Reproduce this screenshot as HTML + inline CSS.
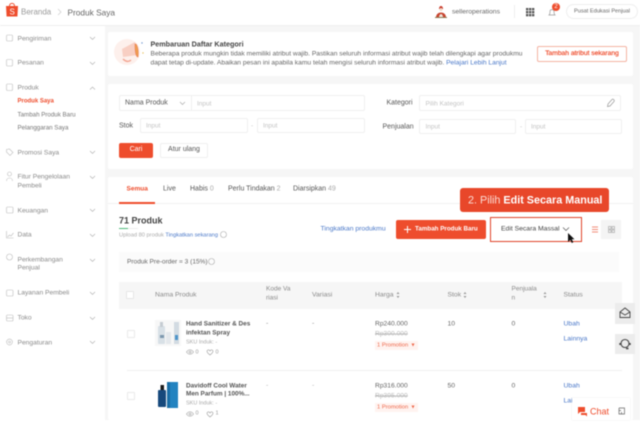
<!DOCTYPE html>
<html><head><meta charset="utf-8"><style>
html,body{margin:0;padding:0;background:#fff}
#p{position:relative;width:640px;height:435px;overflow:hidden;background:#fff;font-family:"Liberation Sans",sans-serif;color:#555}
#w{position:absolute;left:0;top:0;width:640px;height:435px;filter:blur(.5px)}
.t{position:absolute;white-space:nowrap;line-height:12px;font-size:7px;transform:translateY(.5px)}
.b{position:absolute;box-sizing:border-box}
.s{color:#8a8a8a;font-size:6.700px}
.ph{color:#c4c4c4;font-size:6.500px}
.in{position:absolute;box-sizing:border-box;border:1px solid #f0f0f0;border-radius:2px;background:#fff}
.bl{color:#4a78c8}
svg{position:absolute;overflow:visible}
</style></head><body><div id="p"><div id="w">
<div class="b" style="left:105px;top:25px;width:535px;height:395px;background:#f6f6f6"></div>
<div class="b" style="left:0;top:25px;width:640px;height:1px;background:#efefef"></div>
<div class="b" style="left:0;top:420px;width:640px;height:15px;background:#fff"></div>

<!-- header -->
<svg style="left:6px;top:2px" width="12" height="15" viewBox="0 0 12 15"><path d="M0 4h12l-.6 10.500H.6z" fill="#ee4d2d"/><path d="M3.500 4C3.500 .5 8.500 .5 8.500 4" fill="none" stroke="#ee4d2d" stroke-width="1"/></svg>
<span class="t" style="left:9.500px;top:5.500px;color:#fff;font-size:8px">S</span>
<span class="t" style="left:21px;top:5.500px;font-size:8px;color:#999">Beranda</span>
<svg style="left:57px;top:8px" width="5" height="8"><path d="M1 1l3 3-3 3" fill="none" stroke="#ccc" stroke-width=".7"/></svg>
<span class="t" style="left:67.500px;top:5.500px;font-size:8.300px;color:#666">Produk Saya</span>
<svg style="left:435px;top:5px" width="12" height="13" viewBox="0 0 12 13"><path d="M4 4c0-4 4-4 4 0z" fill="#c8392a"/><circle cx="6" cy="4.500" r="1.500" fill="#f1d8c8"/><path d="M1 12c.5-6 9.500-6 10 0z" fill="#c8442f"/><path d="M4 12c.5-4 3.500-4 4 0z" fill="#f0e8e0"/><path d="M0 12h12v1H0z" fill="#8c7a52"/></svg>
<span class="t" style="left:452px;top:5.500px;font-size:6.800px;color:#666">selleroperations</span>
<div class="b" style="left:514px;top:5px;width:1px;height:13px;background:#eee"></div>
<svg style="left:525.500px;top:7.500px" width="9" height="9"><g fill="#555"><rect x="0" y="0" width="2.300" height="2.300"/><rect x="3" y="0" width="2.300" height="2.300"/><rect x="6" y="0" width="2.300" height="2.300"/><rect x="0" y="3" width="2.300" height="2.300"/><rect x="3" y="3" width="2.300" height="2.300"/><rect x="6" y="3" width="2.300" height="2.300"/><rect x="0" y="6" width="2.300" height="2.300"/><rect x="3" y="6" width="2.300" height="2.300"/><rect x="6" y="6" width="2.300" height="2.300"/></g></svg>
<svg style="left:548px;top:8px" width="8" height="9"><path d="M1 7c1-1 1-2 1-3.500C2 1 6 1 6 3.500 6 5 6 6 7 7z" fill="none" stroke="#999" stroke-width=".7"/></svg>
<div class="b" style="left:552px;top:3px;width:8px;height:8px;border-radius:50%;background:#ee4d2d;color:#fff;font-size:6px;line-height:8px;text-align:center">2</div>
<div class="b" style="left:566px;top:4px;width:72px;height:15px;border:1px solid #eee;border-radius:8px;background:#fff"></div>
<span class="t" style="left:574px;top:5px;font-size:5.600px;color:#666">Pusat Edukasi Penjual</span>

<!-- sidebar -->
<svg style="left:6px;top:33px" width="8" height="245" fill="none" stroke="#bbb" stroke-width=".6">
<rect x=".5" y="2" width="6" height="6" rx="1"/><rect x=".5" y="26.500" width="6" height="6.500" rx="1"/><rect x=".5" y="51" width="6" height="6.500" rx="1"/>
<path d="M.5 116.500l3-.5 3.500 3.500-3 3-3.500-3.500z"/><circle cx="3.500" cy="141" r="2"/><path d="M.5 148c0-4 6-4 6 0"/>
<rect x=".5" y="174" width="6.500" height="6" rx="1"/><path d="M.5 198v7h7M1.500 204l2-2 1.500 1 2.500-3"/><circle cx="3.500" cy="224" r="3"/>
</svg>
<svg style="left:6px;top:290px" width="8" height="60" fill="none" stroke="#bbb" stroke-width=".6"><rect x=".5" y="0" width="6.500" height="6" rx="1"/><rect x=".5" y="25" width="6.500" height="6" rx="1"/><path d="M.5 28h6.500"/><circle cx="3.500" cy="52" r="2.900"/><circle cx="3.500" cy="52" r="1"/></svg>
<span class="t s" style="left:17.500px;top:32.500px">Pengiriman</span>
<span class="t s" style="left:17.500px;top:57px">Pesanan</span>
<span class="t s" style="left:17.500px;top:81.500px">Produk</span>
<span class="t" style="left:17.500px;top:95px;color:#ee4d2d;font-weight:bold;font-size:6px">Produk Saya</span>
<span class="t" style="left:17.500px;top:108.500px;font-size:6.200px;color:#777">Tambah Produk Baru</span>
<span class="t" style="left:17.500px;top:122px;font-size:6.200px;color:#777">Pelanggaran Saya</span>
<span class="t s" style="left:17.500px;top:146.500px">Promosi Saya</span>
<span class="t s" style="left:17.500px;top:171px">Fitur Pengelolaan</span>
<span class="t s" style="left:17.500px;top:180px">Pembeli</span>
<span class="t s" style="left:17.500px;top:204.500px">Keuangan</span>
<span class="t s" style="left:17.500px;top:229px">Data</span>
<span class="t s" style="left:17.500px;top:253.500px">Perkembangan</span>
<span class="t s" style="left:17.500px;top:262px">Penjual</span>
<span class="t s" style="left:17.500px;top:287px">Layanan Pembeli</span>
<span class="t s" style="left:17.500px;top:312px">Toko</span>
<span class="t s" style="left:17.500px;top:336.500px">Pengaturan</span>
<svg style="left:89px;top:30px" width="10" height="320" fill="none" stroke="#aaa" stroke-width=".6">
<path d="M1 7l2.500 2.500L6 7M1 32l2.500 2.500L6 32M1 59.500L3.500 57 6 59.500M1 121l2.500 2.500L6 121M1 146l2.500 2.500L6 146M1 179l2.500 2.500L6 179M1 204l2.500 2.500L6 204M1 229l2.500 2.500L6 229M1 262l2.500 2.500L6 262M1 287l2.500 2.500L6 287M1 311l2.500 2.500L6 311"/></svg>

<!-- card 1 -->
<div class="b" style="left:108px;top:32px;width:525px;height:44px;background:#fff;border-radius:2px"></div>
<svg style="left:114px;top:38px" width="34" height="30" viewBox="0 0 34 30"><circle cx="13" cy="14" r="13" fill="#fdf0ec"/><path d="M8 11l13-7 3 13-15 2z" fill="#f8cfc3"/><path d="M21 6c2-1 4 6 3 13-2 0-3-6-3-13z" fill="#efa04f" stroke="#ea7c55" stroke-width=".6"/><path d="M9 21c3 3 6 3 8 1" fill="none" stroke="#f3a592" stroke-width="1.400"/><circle cx="28" cy="5" r=".7" fill="#6b93cf"/><circle cx="29" cy="15" r=".7" fill="#e8c05a"/></svg>
<span class="t" style="left:150.500px;top:38px;font-size:7.200px;font-weight:bold;color:#444">Pembaruan Daftar Kategori</span>
<span class="t" style="left:150.500px;top:48px;font-size:6.680px;color:#666">Beberapa produk mungkin tidak memiliki atribut wajib. Pastikan seluruh informasi atribut wajib telah dilengkapi agar produkmu</span>
<span class="t" style="left:150.500px;top:56.500px;font-size:6.680px;color:#666">dapat tetap di-update. Abaikan pesan ini apabila kamu telah mengisi seluruh informasi atribut wajib. <span class="bl">Pelajari Lebih Lanjut</span></span>
<div class="b" style="left:537px;top:46px;width:90px;height:16px;border:1px solid #f4b3a3;border-radius:2px;background:#fff;color:#ee4d2d;font-size:6.700px;line-height:14px;text-align:center;-webkit-text-stroke:.2px #ee4d2d">Tambah atribut sekarang</div>

<!-- card 2 -->
<div class="b" style="left:108px;top:84px;width:525px;height:85px;background:#fff;border-radius:2px"></div>
<div class="in" style="left:119px;top:95px;width:246px;height:16px"></div>
<div class="b" style="left:191px;top:96px;width:1px;height:14px;background:#f0f0f0"></div>
<span class="t" style="left:125px;top:97px;color:#555">Nama Produk</span>
<svg style="left:179px;top:101px" width="7" height="5"><path d="M1 1l2.500 2.500L6 1" fill="none" stroke="#aaa" stroke-width=".7"/></svg>
<span class="t ph" style="left:197px;top:97.500px">Input</span>
<span class="t" style="left:119px;top:120px;color:#555">Stok</span>
<div class="in" style="left:140px;top:118px;width:108px;height:15px"></div>
<span class="t ph" style="left:146px;top:120px">Input</span>
<span class="t ph" style="left:251px;top:120px">-</span>
<div class="in" style="left:257px;top:118px;width:108px;height:15px"></div>
<span class="t ph" style="left:263px;top:120px">Input</span>
<span class="t" style="left:386.500px;top:96.500px;color:#555">Kategori</span>
<div class="in" style="left:419px;top:95px;width:202px;height:16px"></div>
<span class="t ph" style="left:425.500px;top:97.500px">Pilih Kategori</span>
<svg style="left:606px;top:98px" width="10" height="10"><path d="M2 6l4-4.500c1-1 3 .8 2 2L4 8 1.500 8.500z" fill="none" stroke="#999" stroke-width=".7"/></svg>
<span class="t" style="left:382.500px;top:120.500px;color:#555">Penjualan</span>
<div class="in" style="left:419px;top:119px;width:97px;height:15px"></div>
<span class="t ph" style="left:425.500px;top:121px">Input</span>
<span class="t ph" style="left:520px;top:121px">-</span>
<div class="in" style="left:525px;top:119px;width:97px;height:15px"></div>
<span class="t ph" style="left:531px;top:121px">Input</span>
<div class="b" style="left:119px;top:143px;width:34px;height:15px;background:#ee4d2d;border-radius:2px;color:#fff;font-size:7px;line-height:14px;text-align:center">Cari</div>
<div class="b" style="left:160px;top:143px;width:48px;height:15px;border:1px solid #f0f0f0;border-radius:2px;background:#fff;color:#555;font-size:7px;line-height:11px;text-align:center">Atur ulang</div>

<!-- card 3 -->
<div class="b" style="left:108px;top:177px;width:525px;height:243px;background:#fff;border-radius:2px"></div>
<div class="b" style="left:108px;top:203px;width:525px;height:1px;background:#f2f2f2"></div>
<span class="t" style="left:126.500px;top:183px;color:#ee4d2d;font-size:6.500px;font-weight:bold">Semua</span>
<div class="b" style="left:119px;top:202px;width:36px;height:1.500px;background:#ee4d2d"></div>
<span class="t" style="left:163px;top:183px">Live</span>
<span class="t" style="left:190px;top:183px">Habis <span style="color:#aaa">0</span></span>
<span class="t" style="left:228px;top:183px">Perlu Tindakan <span style="color:#aaa">2</span></span>
<span class="t" style="left:293px;top:183px">Diarsipkan <span style="color:#aaa">49</span></span>

<span class="t" style="left:119px;top:214px;font-size:9px;font-weight:bold;color:#444">71 Produk</span>
<div class="b" style="left:119px;top:227.500px;width:9px;height:1.500px;background:#4fba7a"></div>
<div class="b" style="left:128px;top:227.500px;width:10px;height:1.500px;background:#eee"></div>
<span class="t" style="left:119px;top:229px;font-size:5.700px;color:#aaa">Upload 80 produk <span class="bl">Tingkatkan sekarang</span></span>
<svg style="left:220px;top:231px" width="7" height="7"><circle cx="3.500" cy="3.500" r="3" fill="none" stroke="#aaa" stroke-width=".6"/></svg>
<span class="t bl" style="left:320.500px;top:223px;font-size:6.800px">Tingkatkan produkmu</span>
<div class="b" style="left:396px;top:220px;width:90px;height:19px;background:#ee4d2d;border-radius:2px;"></div>
<svg style="left:403px;top:225px" width="9" height="9"><path d="M4.500 1v7M1 4.500h7" stroke="#fff" stroke-width="1"/></svg>
<span class="t" style="left:415px;top:223px;color:#fff;font-weight:bold;font-size:6.250px">Tambah Produk Baru</span>
<div class="b" style="left:490px;top:216.500px;width:91.500px;height:25px;border:1.500px solid #e0442a;background:#fff"></div>
<span class="t" style="left:501px;top:223px;color:#444;font-size:6.800px">Edit Secara Massal</span>
<svg style="left:562px;top:227px" width="8" height="5"><path d="M1 .5l3 3 3-3" fill="none" stroke="#555" stroke-width=".7"/></svg>
<svg style="left:567px;top:232px" width="9" height="12"><path d="M1 1v9l2.300-2 1.500 3 1.500-.7-1.500-3H7.500z" fill="#111"/></svg>
<div class="b" style="left:601px;top:220px;width:20px;height:19px;background:#f4f4f4"></div>
<svg style="left:592px;top:226px" width="8" height="8"><path d="M0 1h6M0 3.500h6M0 6h6" stroke="#ee6a4d" stroke-width=".7"/></svg>
<svg style="left:608px;top:226px" width="8" height="8"><g fill="none" stroke="#aaa" stroke-width=".7"><rect x=".5" y=".5" width="2.500" height="2.500"/><rect x="4" y=".5" width="2.500" height="2.500"/><rect x=".5" y="4" width="2.500" height="2.500"/><rect x="4" y="4" width="2.500" height="2.500"/></g></svg>

<div class="b" style="left:460px;top:188px;width:148.500px;height:24px;background:#e8472a;border-radius:3px"></div>
<span class="t" style="left:468px;top:194px;font-size:10.800px;color:#fbdcd4">2. Pilih <b style="color:#fff">Edit Secara Manual</b></span>

<div class="b" style="left:119px;top:252px;width:500px;height:20px;background:#fbfbfb"></div>
<span class="t" style="left:127px;top:256px;font-size:6.550px;color:#666">Produk Pre-order = 3 (15%)</span>
<svg style="left:208px;top:258px" width="7" height="7"><circle cx="3.500" cy="3.500" r="3" fill="none" stroke="#aaa" stroke-width=".6"/></svg>

<!-- table head -->
<div class="b" style="left:119px;top:281.500px;width:503px;height:27px;background:#f6f6f6"></div>
<div class="b" style="left:126px;top:291px;width:8px;height:8px;border:1px solid #e6e6e6;border-radius:1px;background:#fff"></div>
<span class="t s" style="left:155px;top:289px;font-size:6.800px">Nama Produk</span>
<span class="t s" style="left:266px;top:283px;font-size:6.500px">Kode Va</span>
<span class="t s" style="left:266px;top:292px;font-size:6.500px">riasi</span>
<span class="t s" style="left:312px;top:289px;font-size:6.800px">Variasi</span>
<span class="t s" style="left:375px;top:289px;font-size:6.800px">Harga</span>
<span class="t s" style="left:447.500px;top:289px;font-size:6.800px">Stok</span>
<span class="t s" style="left:511.500px;top:283px;font-size:6.500px">Penjuala</span>
<span class="t s" style="left:511.500px;top:292px;font-size:6.500px">n</span>
<span class="t s" style="left:563.500px;top:289px;font-size:6.800px">Status</span>
<svg style="left:396px;top:292px" width="4" height="6"><path d="M2 0l1.500 2h-3zM2 6L.5 4h3z" fill="#999"/></svg>
<svg style="left:463px;top:292px" width="4" height="6"><path d="M2 0l1.500 2h-3zM2 6L.5 4h3z" fill="#999"/></svg>
<svg style="left:543px;top:292px" width="4" height="6"><path d="M2 0l1.500 2h-3zM2 6L.5 4h3z" fill="#999"/></svg>

<!-- row 1 -->
<div class="b" style="left:127px;top:330px;width:8px;height:8px;border:1px solid #eaeaea;border-radius:1px"></div>
<svg style="left:155px;top:320px" width="26" height="26"><rect width="26" height="26" fill="#f7f7f7"/><rect x="3" y="6" width="7" height="18" rx="1" fill="#d8e0e6"/><rect x="5" y="2" width="3" height="5" fill="#c5ccd2"/><rect x="11" y="12" width="5" height="12" fill="#e4e8ec"/><rect x="19" y="2" width="5" height="22" fill="#d2dbe2"/><rect x="20" y="15" width="3" height="5" fill="#4e94c8"/><rect x="5" y="15" width="4" height="3" fill="#7d98ae"/></svg>
<span class="t" style="left:186px;top:318px;font-weight:bold;font-size:6.400px;color:#555">Hand Sanitizer &amp; Des</span>
<span class="t" style="left:186px;top:326.500px;font-weight:bold;font-size:6.400px;color:#555">infektan Spray</span>
<span class="t" style="left:186px;top:335.500px;font-size:5.500px;color:#aaa">SKU Induk: -</span>
<svg style="left:186px;top:349px" width="30" height="7" fill="none" stroke="#999" stroke-width=".6"><path d="M.5 3c2-3 5-3 7 0-2 3-5 3-7 0z"/><circle cx="4" cy="3" r="1"/><path d="M21 2c1-2 2.500-1 3 0 .5-1 2-2 3 0 0 2-2 3-3 4-1-1-3-2-3-4z"/></svg>
<span class="t" style="left:195.500px;top:346px;font-size:5.500px;color:#999">0</span>
<span class="t" style="left:215.500px;top:346px;font-size:5.500px;color:#999">0</span>
<span class="t" style="left:266px;top:318px;color:#999">-</span>
<span class="t" style="left:312px;top:318px;color:#999">-</span>
<span class="t" style="left:375px;top:318px;font-size:6.700px;color:#666">Rp240.000</span>
<span class="t" style="left:375px;top:328px;font-size:6.700px;color:#bbb;text-decoration:line-through">Rp300.000</span>
<div class="b" style="left:375px;top:341px;width:43px;height:9px;background:#fff3f0"></div>
<span class="t" style="left:377px;top:339px;font-size:5.800px;color:#ee6a4d">1 Promotion &nbsp;▾</span>
<span class="t" style="left:447.500px;top:318px;font-size:6.800px;color:#666">10</span>
<span class="t" style="left:511.500px;top:318px;font-size:6.800px;color:#666">0</span>
<span class="t bl" style="left:563.500px;top:317.500px;font-size:6.800px">Ubah</span>
<span class="t bl" style="left:563.500px;top:332.500px;font-size:6.800px">Lainnya</span>
<div class="b" style="left:127px;top:370px;width:495px;height:1px;background:#f0f0f0"></div>

<!-- row 2 -->
<div class="b" style="left:127px;top:392px;width:8px;height:8px;border:1px solid #eaeaea;border-radius:1px"></div>
<svg style="left:156px;top:381px" width="24" height="28"><rect x="2" y="9" width="8" height="17" rx="1" fill="#17497c"/><rect x="4.500" y="4" width="3.500" height="5" fill="#1a1a1a"/><rect x="11" y="1" width="11" height="26" fill="#2283c0"/><rect x="11" y="1" width="3" height="26" fill="#1a6ea6"/></svg>
<span class="t" style="left:186px;top:380px;font-weight:bold;font-size:6.400px;color:#555">Davidoff Cool Water</span>
<span class="t" style="left:186px;top:388px;font-weight:bold;font-size:6.400px;color:#555">Men Parfum | 100%...</span>
<span class="t" style="left:186px;top:397px;font-size:5.500px;color:#aaa">SKU Induk: -</span>
<svg style="left:186px;top:410.500px" width="30" height="7" fill="none" stroke="#999" stroke-width=".6"><path d="M.5 3c2-3 5-3 7 0-2 3-5 3-7 0z"/><circle cx="4" cy="3" r="1"/><path d="M21 2c1-2 2.500-1 3 0 .5-1 2-2 3 0 0 2-2 3-3 4-1-1-3-2-3-4z"/></svg>
<span class="t" style="left:195.500px;top:407px;font-size:5.500px;color:#999">0</span>
<span class="t" style="left:215.500px;top:407px;font-size:5.500px;color:#999">1</span>
<span class="t" style="left:266px;top:380px;color:#bbb">-</span>
<span class="t" style="left:312px;top:380px;color:#bbb">-</span>
<span class="t" style="left:375px;top:380px;font-size:6.700px;color:#666">Rp316.000</span>
<span class="t" style="left:375px;top:390px;font-size:6.700px;color:#bbb;text-decoration:line-through">Rp395.000</span>
<div class="b" style="left:375px;top:402.500px;width:43px;height:9px;background:#fff3f0"></div>
<span class="t" style="left:377px;top:400.500px;font-size:5.800px;color:#ee6a4d">1 Promotion &nbsp;▾</span>
<span class="t" style="left:447.500px;top:380px;font-size:6.800px;color:#666">50</span>
<span class="t" style="left:511.500px;top:380px;font-size:6.800px;color:#666">0</span>
<span class="t bl" style="left:563.500px;top:379.500px;font-size:6.800px">Ubah</span>
<span class="t bl" style="left:563.500px;top:394.500px;font-size:6.800px">Lainnya</span>

<!-- floating -->
<div class="b" style="left:615px;top:303px;width:20px;height:21px;background:#ececec"></div>
<svg style="left:619px;top:307px" width="12" height="12" fill="none" stroke="#444" stroke-width=".9"><path d="M1 5l5-4 5 4v5.500H1zM1 5l5 3 5-3"/></svg>
<div class="b" style="left:615px;top:334px;width:20px;height:20px;background:#ececec"></div>
<svg style="left:619px;top:338px" width="12" height="12" fill="none" stroke="#444" stroke-width="1.100"><circle cx="6" cy="5.500" r="4"/><path d="M1 5v2M11 5v2M7 10.500h2.500" stroke-width="1.400"/></svg>
<div class="b" style="left:572px;top:398px;width:58px;height:22px;background:#fff;box-shadow:0 0 2px rgba(0,0,0,.08)"></div>
<svg style="left:578px;top:406.500px" width="10" height="10"><path d="M0 0h7v5H2L0 7z" fill="#ee4d2d"/><path d="M3 6h6v3.500L7.500 8H3z" fill="#ee4d2d"/></svg>
<span class="t" style="left:590px;top:404.500px;font-size:9px;color:#ee4d2d">Chat</span>
<svg style="left:618px;top:407px" width="8" height="8" fill="none" stroke="#666" stroke-width=".7"><path d="M1 1h5.500v6H3.500M1 1v2.500M3 3.500l-2 0v3.500h2.500V5"/></svg>
</div></div></body></html>
